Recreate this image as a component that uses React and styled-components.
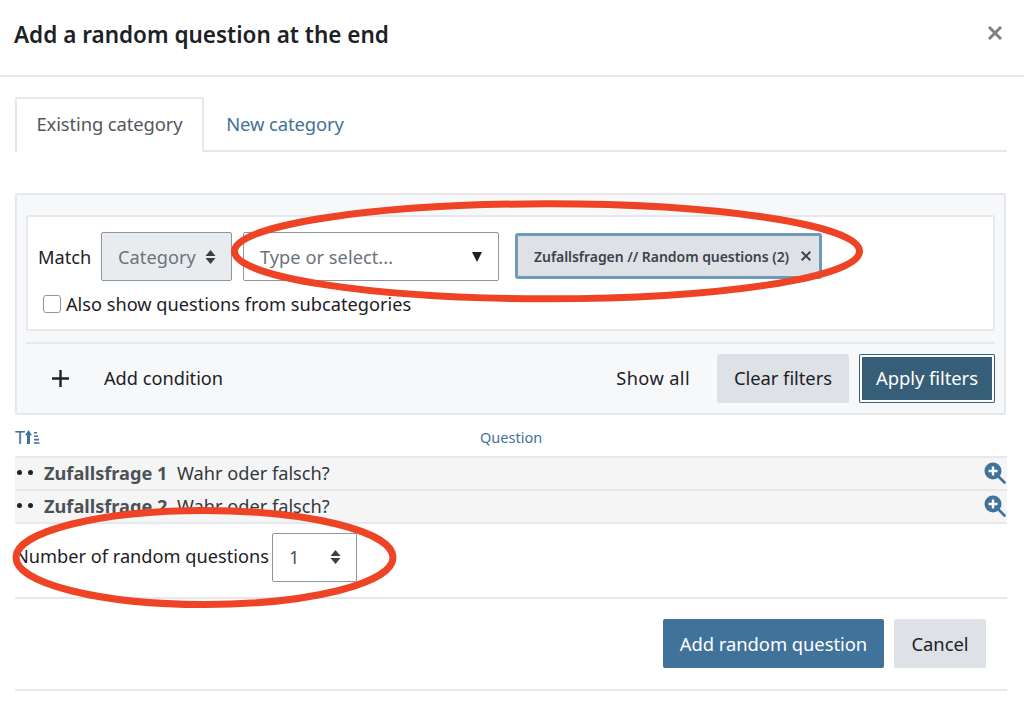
import React from 'react';
import styled, { createGlobalStyle } from 'styled-components';

const GlobalStyle = createGlobalStyle`
  html, body {
    margin: 0;
    padding: 0;
    background: #fff;
  }
  body {
    font-family: "Noto Sans", "Open Sans", sans-serif;
    font-size: 18px;
    color: #1d2125;
    overflow: hidden;
  }
  * {
    box-sizing: border-box;
  }
`;

const Page = styled.div`
  position: relative;
  width: 1024px;
  height: 713px;
  overflow: hidden;
`;

const Header = styled.header`
  display: flex;
  align-items: center;
  justify-content: space-between;
  height: 77px;
  padding: 0 22px 7px 14px;
  border-bottom: 2px solid #e6e8eb;
`;

const Title = styled.h2`
  margin: 0;
  font-size: 22.5px;
  font-weight: 600;
  color: #1d2125;
`;

const CloseIcon = styled.svg`
  width: 14px;
  height: 14px;
  margin-bottom: 2px;
  stroke: #7d8186;
  stroke-width: 3;
`;

const Body = styled.div`
  padding: 20px 17px 0 15px;
`;

const Tabs = styled.nav`
  display: flex;
  height: 55px;
  border-bottom: 2px solid #e6e8eb;
`;

const Tab = styled.div`
  display: flex;
  align-items: center;
  justify-content: center;
  height: 55px;
  font-size: 18.4px;
  letter-spacing: -0.1px;
  color: ${(p) => (p.$active ? '#52585e' : '#40729a')};
  ${(p) =>
    p.$active
      ? `
    width: 189px;
    padding-bottom: 5px;
    background: #fff;
    border: 2px solid #e6e8eb;
    border-bottom: 0;
    border-radius: 2px 2px 0 0;
  `
      : `
    width: 162px;
    padding-bottom: 3px;
  `}
`;

const FilterBox = styled.section`
  margin-top: 41px;
  height: 222px;
  width: 991px;
  padding: 20px 9px 0;
  background: #f7f8fa;
  border: 2px solid #e6e8eb;
  border-radius: 2px;
`;

const ConditionCard = styled.div`
  height: 116px;
  padding: 15px 0 0 10px;
  background: #fff;
  border: 2px solid #e6e8eb;
  border-radius: 2px;
`;

const ConditionRow = styled.div`
  display: flex;
  align-items: center;
  height: 49px;
`;

const MatchLabel = styled.span`
  width: 63px;
  font-size: 18.2px;
`;

const Select = styled.div`
  display: flex;
  align-items: center;
  justify-content: space-between;
  width: ${(p) => p.$width}px;
  height: 49px;
  padding: 0 15px 0 16px;
  font-size: 18.2px;
  letter-spacing: 0.05px;
  color: ${(p) => p.$color || '#6a737b'};
  background: ${(p) => p.$bg || '#fff'};
  border: 1.5px solid #8f959e;
  border-radius: 2px;
  flex-shrink: 0;
`;

const TypeSelect = styled(Select)`
  margin-left: 11px;
  padding-right: 16px;
`;

const Stepper = styled.svg`
  width: 11px;
  height: 16px;
  fill: #3b4045;
  flex-shrink: 0;
`;

const Caret = styled.svg`
  width: 10px;
  height: 11px;
  fill: #1d2125;
`;

const Tag = styled.div`
  display: flex;
  align-items: center;
  justify-content: space-between;
  width: 307px;
  height: 46px;
  margin: 0 0 1px 16px;
  padding: 0 8px 0 16px;
  font-size: 14px;
  font-weight: 600;
  letter-spacing: -0.05px;
  color: #3d4349;
  background: #dee2e6;
  border: 3px solid #6d9ab7;
  border-radius: 3px;
`;

const TagClose = styled.svg`
  width: 10px;
  height: 10px;
  stroke: #3d4349;
  stroke-width: 2;
`;

const CheckRow = styled.label`
  display: flex;
  align-items: center;
  gap: 5px;
  margin: 11px 0 0 5px;
  font-size: 18.2px;
`;

const CheckBox = styled.span`
  display: block;
  width: 18px;
  height: 18px;
  background: #fff;
  border: 1.5px solid #8f959e;
  border-radius: 3px;
`;

const PlusIcon = styled.svg`
  width: 17px;
  height: 17px;
  margin: 0 35px 0 26px;
  stroke: #1d2125;
  stroke-width: 2.4;
`;

const ActionText = styled.span`
  margin-top: -2px;
  font-size: 18.2px;
`;

const Spacer = styled.div`
  flex: 1;
`;

const Button = styled.div`
  display: flex;
  align-items: center;
  justify-content: center;
  height: 49px;
  width: ${(p) => p.$width}px;
  font-size: 18.4px;
  letter-spacing: -0.05px;
  color: ${(p) => (p.$primary ? '#fff' : '#1d2125')};
  background: ${(p) => (p.$primary ? '#40729a' : '#dee2e6')};
  border-radius: 2px;
  flex-shrink: 0;
`;

const Actions = styled.div`
  display: flex;
  align-items: center;
  height: 61px;
  margin-top: 11px;
  padding-top: 10px;
  border-top: 2px solid #e6e8eb;

  ${Button} {
    padding-bottom: 2px;
  }
`;

const ShowAll = styled(ActionText)`
  margin-right: 27px;
  letter-spacing: 0.4px;
`;

const ApplyButton = styled(Button)`
  margin-left: 10px;
  color: #fff;
  background: #375e79;
  box-shadow: inset 0 0 0 1px #375e79, inset 0 0 0 3px #fff;
`;

const TableHead = styled.div`
  display: flex;
  align-items: center;
  height: 41px;
  padding-top: 3px;
  font-size: 14.5px;
  color: #40729a;
`;

const SortIcon = styled.span`
  display: flex;
  align-items: center;
  width: 465px;
  font-size: 18px;
  line-height: 18px;
`;

const SortGlyph = styled.svg`
  width: 15px;
  height: 16px;
  fill: #40729a;
`;

const Row = styled.div`
  display: flex;
  align-items: center;
  height: 33px;
  padding: 0 1px 2px 2px;
  background: #f5f5f5;
  border-top: 2px solid #e6e8eb;
`;

const Dots = styled.span`
  display: flex;
  gap: 6px;
  width: 27px;
`;

const Dot = styled.i`
  display: block;
  width: 5px;
  height: 5px;
  border-radius: 50%;
  background: #1d2125;
`;

const QuestionName = styled.strong`
  width: 133px;
  font-size: 18.2px;
  font-weight: 700;
  color: #4c5157;
`;

const QuestionText = styled.span`
  flex: 1;
  font-size: 18.2px;
  color: #33383d;
`;

const ZoomIcon = styled.svg`
  width: 22px;
  height: 22px;
  flex-shrink: 0;
`;

const NumberRow = styled.div`
  display: flex;
  align-items: center;
  height: 77px;
  padding-bottom: 7px;
  border-top: 2px solid #e6e8eb;
  border-bottom: 2px solid #e6e8eb;
`;

const NumberLabel = styled.span`
  width: 257px;
  margin-top: -2px;
  font-size: 18.2px;
`;

const Footer = styled.footer`
  display: flex;
  justify-content: flex-end;
  gap: 10px;
  height: 92px;
  padding: 20px 21px 0 0;
  border-bottom: 2px solid #e6e8eb;
`;

const Annotation = styled.svg`
  position: absolute;
  inset: 0;
  width: 1024px;
  height: 713px;
  pointer-events: none;
`;

const StepperGlyph = () => (
  <Stepper viewBox="0 0 11 16">
    <path d="M5.5 1 10.5 7H.5zM.5 9h10l-5 6z" />
  </Stepper>
);

const QuestionRow = ({ name }) => (
  <Row>
    <Dots>
      <Dot />
      <Dot />
    </Dots>
    <QuestionName>{name}</QuestionName>
    <QuestionText>Wahr oder falsch?</QuestionText>
    <ZoomIcon viewBox="0 0 22 22">
      <path d="M14 14 20.5 20.5" stroke="#40729a" strokeWidth="2.6" strokeLinecap="round" />
      <circle cx="9" cy="9" r="8.5" fill="#40729a" />
      <path d="M9 4.5v9M4.5 9h9" stroke="#fff" strokeWidth="2.4" />
    </ZoomIcon>
  </Row>
);

export default function App() {
  return (
    <Page>
      <GlobalStyle />
      <Header>
        <Title>Add a random question at the end</Title>
        <CloseIcon viewBox="0 0 14 14">
          <path d="M1 1 13 13M13 1 1 13" />
        </CloseIcon>
      </Header>
      <Body>
        <Tabs>
          <Tab $active>Existing category</Tab>
          <Tab>New category</Tab>
        </Tabs>
        <FilterBox>
          <ConditionCard>
            <ConditionRow>
              <MatchLabel>Match</MatchLabel>
              <Select $width={131} $bg="#e9ecef">
                Category
                <StepperGlyph />
              </Select>
              <TypeSelect $width={256}>
                Type or select...
                <Caret viewBox="0 0 10 11">
                  <path d="M0 1h10L5 11z" />
                </Caret>
              </TypeSelect>
              <Tag>
                Zufallsfragen // Random questions (2)
                <TagClose viewBox="0 0 10 10">
                  <path d="M.7.7 9.3 9.3M9.3.7.7 9.3" />
                </TagClose>
              </Tag>
            </ConditionRow>
            <CheckRow>
              <CheckBox />
              Also show questions from subcategories
            </CheckRow>
          </ConditionCard>
          <Actions>
            <PlusIcon viewBox="0 0 17 17">
              <path d="M8.5 0v17M0 8.5h17" />
            </PlusIcon>
            <ActionText>Add condition</ActionText>
            <Spacer />
            <ShowAll>Show all</ShowAll>
            <Button $width={132}>Clear filters</Button>
            <ApplyButton $width={136}>Apply filters</ApplyButton>
          </Actions>
        </FilterBox>
        <TableHead>
          <SortIcon>
            T
            <SortGlyph viewBox="0 0 15 16">
              <path d="M3.5 1 7 6.2H5V15H2V6.2H0zM9 3h3v1.6H9zM9 6.4h4v1.6H9zM9 9.8h5v1.6H9zM9 13.2h5.5v1.6H9z" />
            </SortGlyph>
          </SortIcon>
          <span>Question</span>
        </TableHead>
        <QuestionRow name="Zufallsfrage 1" />
        <QuestionRow name="Zufallsfrage 2" />
        <NumberRow>
          <NumberLabel>Number of random questions</NumberLabel>
          <Select $width={85} $color="#495057">
            1
            <StepperGlyph />
          </Select>
        </NumberRow>
        <Footer>
          <Button $primary $width={221}>Add random question</Button>
          <Button $width={92}>Cancel</Button>
        </Footer>
      </Body>
      <Annotation viewBox="0 0 1024 713" fill="none" stroke="#ee4324">
        <ellipse cx="547" cy="251.3" rx="312.5" ry="47.5" strokeWidth="7" />
        <ellipse cx="204.5" cy="557.5" rx="188.5" ry="47" strokeWidth="7" />
      </Annotation>
    </Page>
  );
}
